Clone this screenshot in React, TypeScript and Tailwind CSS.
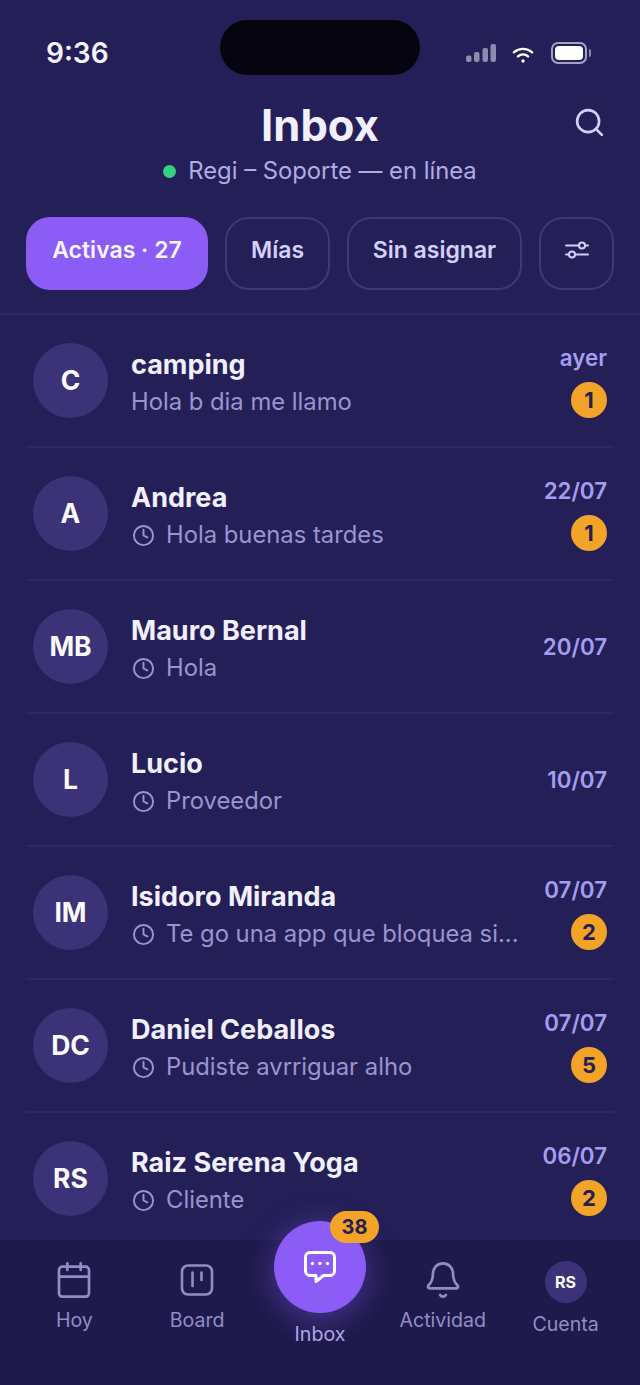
import React from 'react';
import { Search, Clock, Calendar, Bell } from 'lucide-react';

interface Conversation {
  initials: string;
  name: string;
  preview: string;
  date: string;
  unread?: number;
  waiting?: boolean;
}

const conversations: Conversation[] = [
  { initials: 'C', name: 'camping', preview: 'Hola b dia me llamo', date: 'ayer', unread: 1 },
  { initials: 'A', name: 'Andrea', preview: 'Hola buenas tardes', date: '22/07', unread: 1, waiting: true },
  { initials: 'MB', name: 'Mauro Bernal', preview: 'Hola', date: '20/07', waiting: true },
  { initials: 'L', name: 'Lucio', preview: 'Proveedor', date: '10/07', waiting: true },
  { initials: 'IM', name: 'Isidoro Miranda', preview: 'Te go una app que bloquea si...', date: '07/07', unread: 2, waiting: true },
  { initials: 'DC', name: 'Daniel Ceballos', preview: 'Pudiste avrriguar alho', date: '07/07', unread: 5, waiting: true },
  { initials: 'RS', name: 'Raiz Serena Yoga', preview: 'Cliente', date: '06/07', unread: 2, waiting: true },
];

const StatusBar = () => (
  <div className="relative h-[100px] shrink-0">
    <div className="absolute left-[220px] top-[20px] h-[55px] w-[200px] rounded-[28px] bg-[#05040f]" />
    <span className="absolute left-[46px] top-[36px] text-[28px] leading-[34px] font-semibold text-[#f4f2ff]">9:36</span>
    <svg className="absolute left-[465px] top-[43px]" width="32" height="20" viewBox="0 0 32 20" fill="#8f8bb0">
      <rect x="1" y="12.5" width="5.5" height="6.5" rx="2" />
      <rect x="9" y="9" width="5.5" height="10" rx="2" />
      <rect x="17.5" y="5" width="5.5" height="14" rx="2" />
      <rect x="25.5" y="1" width="5.5" height="18" rx="2" />
    </svg>
    <svg className="absolute left-[512px] top-[46px]" width="22" height="19" viewBox="0 0 24 20" fill="none" stroke="#ffffff" strokeWidth="2.6" strokeLinecap="round">
      <path d="M2 6.5C8 1.5 16 1.5 22 6.5" />
      <path d="M6.5 11C9.8 8.2 14.2 8.2 17.5 11" />
      <circle cx="12" cy="16" r="1.8" fill="#ffffff" stroke="none" />
    </svg>
    <div className="absolute left-[551px] top-[42px] flex items-center gap-[2px]">
      <div className="h-[22px] w-[36px] rounded-[7px] border-2 border-[#a5a1c9] p-[2px]">
        <div className="h-full w-full rounded-[4px] bg-white" />
      </div>
      <div className="h-[8px] w-[2px] rounded-r-sm bg-[#8f8bb0]" />
    </div>
  </div>
);

const Header = () => (
  <div className="relative flex flex-col items-center shrink-0">
    <h1 className="text-[43.5px] leading-[50px] font-bold text-[#f1effe]">Inbox</h1>
    <Search className="absolute left-[573px] top-[6px] text-[#d5d0fa]" size={33} strokeWidth={1.9} />
    <div className="mt-[6px] flex items-center gap-[12px] text-[23.8px] leading-[30px] text-[#b1abe6]">
      <span className="h-[13px] w-[13px] rounded-full bg-[#34d17f]" />
      <span>Regi – Soporte — en línea</span>
    </div>
  </div>
);

const FilterIcon = () => (
  <svg width="24" height="20" viewBox="0 0 24 20" fill="none" stroke="currentColor" strokeWidth="2">
    <path d="M1 5.5H14M20 5.5H23" strokeLinecap="round" />
    <circle cx="17" cy="5.5" r="3" />
    <path d="M1 14.5H4M10 14.5H23" strokeLinecap="round" />
    <circle cx="7" cy="14.5" r="3" />
  </svg>
);

const Tabs = () => {
  const outline = 'flex h-[73px] items-center justify-center rounded-[24px] border-2 border-[#3e3975] pb-[7px] text-[23px] font-semibold text-[#d5d0fa]';
  return (
    <div className="mt-[31px] flex items-center border-b-2 border-[#2d2960] px-[26px] pb-[23px] shrink-0">
      <div className="flex h-[73px] w-[182px] items-center justify-center rounded-[24px] bg-[#8b5cf6] pb-[7px] text-[23px] font-semibold text-[#f8f6ff]">
        Activas · 27
      </div>
      <div className={`ml-[17px] w-[105px] ${outline}`}>Mías</div>
      <div className={`ml-[17px] w-[175px] ${outline}`}>Sin asignar</div>
      <div className={`ml-[17px] w-[75px] ${outline}`}>
        <FilterIcon />
      </div>
    </div>
  );
};

const ConversationRow = ({ item }: { item: Conversation }) => (
  <div className="mx-[26px] flex h-[133px] shrink-0 items-center border-b-2 border-[#2d2960] pl-[7px] pr-[7px]">
    <div className="flex h-[75px] w-[75px] shrink-0 items-center justify-center rounded-full bg-[#3b3277] text-[26.5px] font-bold text-[#fbfaff]">
      {item.initials}
    </div>
    <div className="ml-[23px] min-w-0 flex-1 pt-[6px]">
      <div className="text-[27px] leading-[34px] font-[650] text-[#f1effe]">{item.name}</div>
      <div className="mt-[3px] flex items-center gap-[11px] text-[23.8px] leading-[34px] text-[#9a94d0]">
        {item.waiting && <Clock className="ml-[1px] shrink-0" size={23} strokeWidth={2} />}
        <span>{item.preview}</span>
      </div>
    </div>
    <div className="flex h-[75px] flex-col items-end justify-center">
      <span className="text-[22.3px] leading-[30px] font-semibold text-[#a59ef0]">{item.date}</span>
      {item.unread !== undefined && (
        <span className="mt-[9px] flex h-[36px] w-[36px] items-center justify-center rounded-full bg-[#f3a428] text-[22px] font-bold text-[#25204f]">
          {item.unread}
        </span>
      )}
    </div>
  </div>
);

const BoardIcon = () => (
  <svg width="34" height="34" viewBox="0 0 34 34" fill="none" stroke="currentColor" strokeWidth="2.6" strokeLinecap="round">
    <rect x="2" y="2.5" width="30" height="29" rx="6" />
    <path d="M12.5 9.5V23" />
    <path d="M21.5 9.5V17" />
  </svg>
);

const ChatIcon = () => (
  <svg width="34" height="34" viewBox="0 0 34 34" fill="none" stroke="#ffffff" strokeWidth="3" strokeLinejoin="round">
    <path d="M7 2.5H27A4.5 4.5 0 0 1 31.5 7V21A4.5 4.5 0 0 1 27 25.5H20.5L13 31.5V25.5H7A4.5 4.5 0 0 1 2.5 21V7A4.5 4.5 0 0 1 7 2.5Z" />
    <circle cx="9.5" cy="13.5" r="1.7" fill="#ffffff" stroke="none" />
    <circle cx="17" cy="13.5" r="1.7" fill="#ffffff" stroke="none" />
    <circle cx="24.5" cy="13.5" r="1.7" fill="#ffffff" stroke="none" />
  </svg>
);

const NavItem = ({ label, icon }: { label: string; icon: React.ReactNode }) => (
  <div className="flex flex-1 flex-col items-center pt-[20px] text-[#938dc6]">
    <div className="flex h-[40px] items-center justify-center">{icon}</div>
    <span className="mt-[6px] text-[19.6px] leading-[28px]">{label}</span>
  </div>
);

const BottomNav = () => (
  <div className="relative flex h-[145px] shrink-0 bg-[#1e1a4b] px-[13px]">
    <NavItem label="Hoy" icon={<Calendar size={40} strokeWidth={1.6} />} />
    <NavItem label="Board" icon={<BoardIcon />} />
    <div className="flex flex-1 flex-col items-center">
      <div className="relative -mt-[19px] flex h-[92px] w-[92px] items-center justify-center rounded-full bg-[#8b5cf6] shadow-[0_6px_32px_rgba(139,92,246,0.45)]">
        <ChatIcon />
        <span className="absolute left-[56px] -top-[10px] flex h-[32px] w-[49px] items-center justify-center rounded-full bg-[#f3a428] text-[20px] font-bold text-[#25204f]">
          38
        </span>
      </div>
      <span className="mt-[7px] text-[19.6px] leading-[28px] text-[#b1abe6]">Inbox</span>
    </div>
    <NavItem label="Actividad" icon={<Bell size={40} strokeWidth={1.6} />} />
    <div className="flex flex-1 flex-col items-center pt-[21px] text-[#938dc6]">
      <div className="flex h-[42px] w-[42px] items-center justify-center rounded-full bg-[#3b3277] text-[16px] font-bold text-[#fbfaff]">
        RS
      </div>
      <span className="mt-[7px] text-[19.6px] leading-[28px]">Cuenta</span>
    </div>
  </div>
);

export default function App() {
  return (
    <div className="flex h-[1385px] w-[640px] flex-col overflow-hidden bg-[#241f57] font-['Inter',sans-serif]">
      <StatusBar />
      <Header />
      <Tabs />
      <div className="flex min-h-0 flex-1 flex-col overflow-hidden">
        {conversations.map(item => (
          <ConversationRow key={item.name} item={item} />
        ))}
      </div>
      <BottomNav />
    </div>
  );
}
